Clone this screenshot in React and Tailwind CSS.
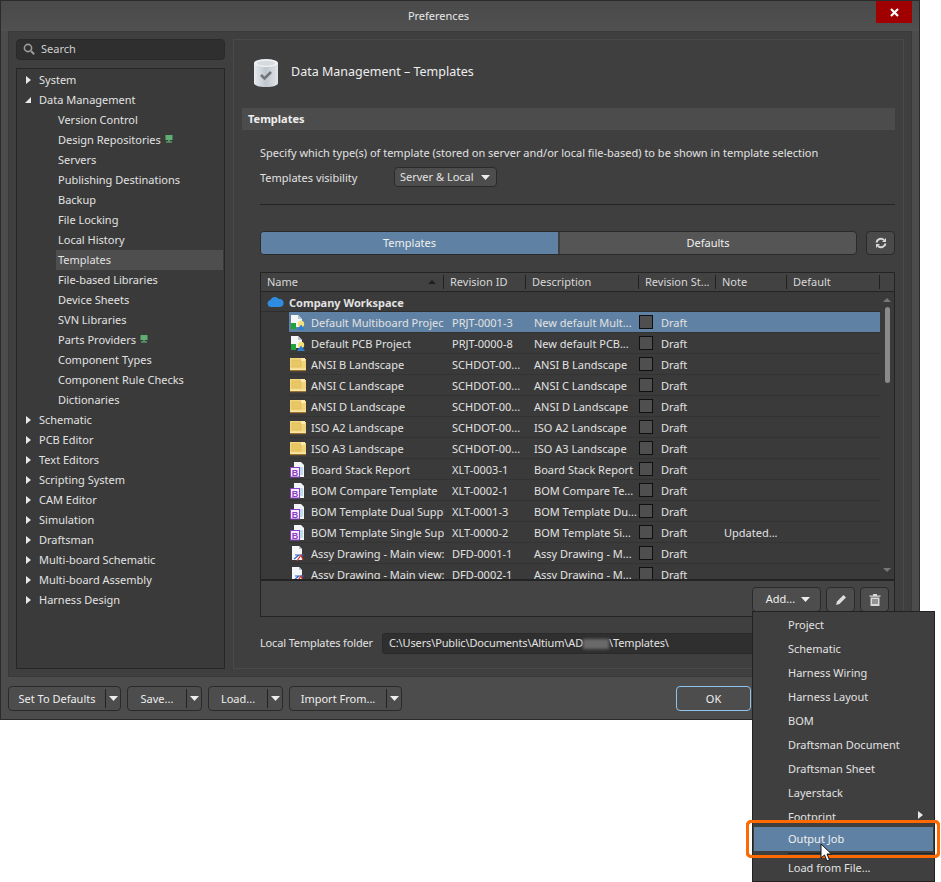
import React from "react";

const tree = [
  ["System", 0, "r"], ["Data Management", 0, "d"], ["Version Control", 1], ["Design Repositories", 1, "g"], ["Servers", 1],
  ["Publishing Destinations", 1], ["Backup", 1], ["File Locking", 1], ["Local History", 1], ["Templates", 1, "s"],
  ["File-based Libraries", 1], ["Device Sheets", 1], ["SVN Libraries", 1], ["Parts Providers", 1, "g"], ["Component Types", 1],
  ["Component Rule Checks", 1], ["Dictionaries", 1], ["Schematic", 0, "r"], ["PCB Editor", 0, "r"], ["Text Editors", 0, "r"],
  ["Scripting System", 0, "r"], ["CAM Editor", 0, "r"], ["Simulation", 0, "r"], ["Draftsman", 0, "r"], ["Multi-board Schematic", 0, "r"],
  ["Multi-board Assembly", 0, "r"], ["Harness Design", 0, "r"],
];

const rows = [
  ["p", "Default Multiboard Projec", "PRJT-0001-3", "New default Mult...", ""],
  ["p", "Default PCB Project", "PRJT-0000-8", "New default PCB...", ""],
  ["f", "ANSI B Landscape", "SCHDOT-00...", "ANSI B Landscape", ""],
  ["f", "ANSI C Landscape", "SCHDOT-00...", "ANSI C Landscape", ""],
  ["f", "ANSI D Landscape", "SCHDOT-00...", "ANSI D Landscape", ""],
  ["f", "ISO A2 Landscape", "SCHDOT-00...", "ISO A2 Landscape", ""],
  ["f", "ISO A3 Landscape", "SCHDOT-00...", "ISO A3 Landscape", ""],
  ["b", "Board Stack Report", "XLT-0003-1", "Board Stack Report", ""],
  ["b", "BOM Compare Template", "XLT-0002-1", "BOM Compare Te...", ""],
  ["b", "BOM Template Dual Suppl", "XLT-0001-3", "BOM Template Du...", ""],
  ["b", "BOM Template Single Sup", "XLT-0000-2", "BOM Template Si...", "Updated..."],
  ["a", "Assy Drawing - Main view:", "DFD-0001-1", "Assy Drawing - M...", ""],
  ["a", "Assy Drawing - Main view:", "DFD-0002-1", "Assy Drawing - M...", ""],
];

const menu = ["Project", "Schematic", "Harness Wiring", "Harness Layout", "BOM", "Draftsman Document", "Draftsman Sheet", "Layerstack"];

const Caret = ({ className = "" }) => (
  <svg width="9" height="5" viewBox="0 0 9 5" className={className}><path d="M0 0h9L4.5 5z" fill="#ececec" /></svg>
);

const Green = () => (
  <svg width="8" height="8" viewBox="0 0 8 8" className="ml-[4px] mt-[-2px]">
    <rect x="0.5" y="0" width="7" height="5" fill="#5fae74" />
    <rect x="3" y="5" width="2" height="1.5" fill="#4d8f60" />
    <rect x="1" y="6.5" width="6" height="1" fill="#6fbf85" />
  </svg>
);

function RowIcon({ t }) {
  if (t === "p")
    return (
      <svg width="16" height="16" viewBox="0 0 16 16" className="shrink-0">
        <path d="M1 0h7l4 4v8H1z" fill="#f4f6f8" />
        <path d="M8 0l4 4H8z" fill="#b9c4cf" />
        <rect x="1" y="8" width="5" height="6" fill="#22a23c" />
        <circle cx="11" cy="9" r="3.200" fill="#f5e27a" />
        <path d="M11 9.500L15 15H7z" fill="#2f7fd0" />
      </svg>
    );
  if (t === "f")
    return (
      <svg width="16" height="14" viewBox="0 0 16 14" className="shrink-0">
        <path d="M0 0h15v1h1v12H0z" fill="#f2d47c" />
        <rect x="0" y="12" width="16" height="1.200" fill="#9c7430" />
        <rect x="0" y="10.500" width="16" height="1.500" fill="#f8e6a8" />
        <rect x="2" y="2" width="9" height="7" fill="#e8c766" stroke="#dcb954" strokeWidth="0.600" />
        <path d="M11 0h4v3h-4z" fill="#fbe9b0" />
      </svg>
    );
  if (t === "b")
    return (
      <svg width="16" height="16" viewBox="0 0 16 16" className="shrink-0">
        <path d="M4 0h7l3 3v12H4z" fill="#f2f5f8" />
        <path d="M9 6h4M9 8h4M9 10h4M9 12h4" stroke="#8fc4e6" strokeWidth="1" />
        <rect x="0.500" y="5.500" width="9" height="9.500" fill="#f4ecfb" stroke="#8a3fc4" />
        <text x="5" y="13.500" fontSize="9" fontWeight="700" textAnchor="middle" fill="#8a3fc4" fontFamily="Liberation Sans">B</text>
      </svg>
    );
  return (
    <svg width="16" height="16" viewBox="0 0 16 16" className="shrink-0">
      <path d="M2 0h7l3 3v11H2z" fill="#f4f6f8" />
      <path d="M9 0l3 3H9z" fill="#b9c4cf" />
      <path d="M4 13l5-4M5 9h9" stroke="#2f62c8" strokeWidth="1.200" />
      <path d="M7 15l4-6 2 5" stroke="#d8342c" strokeWidth="1.200" fill="none" />
    </svg>
  );
}

const Col = ({ w, children }) => (
  <div className={`flex h-full items-center ${w}`}>
    <span className="flex-1 truncate pl-[6px] pr-[2px]">{children}</span>
    <span className="h-[14px] w-px shrink-0 bg-[#202020]" />
  </div>
);

function SplitButton({ w, label }) {
  return (
    <div className={`flex h-[25px] items-center rounded-[4px] border border-[#2a2a2a] bg-[#4d4d4d] ${w}`}>
      <span className="flex-1 pt-px text-center text-[#ededed]">{label}</span>
      <span className="h-[19px] w-px bg-[#222]" />
      <span className="flex w-[14px] justify-center"><Caret /></span>
    </div>
  );
}

export default function App() {
  return (
    <div className="relative h-[882px] w-[941px] overflow-hidden bg-white text-[11px] text-[#e2e2e2] [font-family:'Noto_Sans','Open_Sans',sans-serif]">
      <div className="flex h-[720px] w-[920px] flex-col border border-[#2b2b2b] bg-[#4c4c4c]">
        <div className="flex h-[30px] shrink-0 items-start bg-gradient-to-b from-[#4a4a4a] to-[#505050]">
          <div className="flex-1 pt-[7px] text-center text-[#e8e8e8]">Preferences</div>
          <div className="mr-[7px] flex h-[22px] w-[36px] items-center justify-center bg-[#a00000]">
            <svg width="9" height="9" viewBox="0 0 9 9"><path d="M1 1l7 7M8 1l-7 7" stroke="#fff" strokeWidth="2.200" /></svg>
          </div>
        </div>

        <div className="ml-[7px] flex h-[646px] w-[904px] shrink-0 gap-[8px] border border-[#3a3a3a] bg-[#3f3f3f] p-[7px]">
          <div className="flex w-[209px] shrink-0 flex-col gap-[8px]">
            <div className="flex h-[21px] shrink-0 items-center rounded-[4px] border border-[#2a2a2a] bg-[#2f2f2f] pb-[1px] pl-[6px] text-[#d0d0d0]">
              <svg width="12" height="12" viewBox="0 0 12 12" className="mr-[6px]"><circle cx="5" cy="5" r="3.600" fill="none" stroke="#9a9a9a" strokeWidth="1.600" /><path d="M8 8l3.200 3.200" stroke="#9a9a9a" strokeWidth="2" /></svg>
              Search
            </div>
            <div className="flex-1 border border-[#262626] bg-[#3a3a3a] pt-px">
              {tree.map(([name, lvl, kind]) => (
                <div key={name} className={`flex h-[20px] items-center ${lvl ? "ml-[39px] mr-px" : "pl-[7px]"} ${kind === "s" ? "bg-[#4e4e4e]" : ""}`}>
                  {lvl === 0 && (
                    <span className="flex w-[15px] justify-start pl-[1px]">
                      {kind === "r" ? (
                        <svg width="5" height="8" viewBox="0 0 5 8" className="ml-[1px]"><path d="M0 0l5 4-5 4z" fill="#e8e8e8" /></svg>
                      ) : (
                        <svg width="6" height="6" viewBox="0 0 6 6"><path d="M6 0v6H0z" fill="#e8e8e8" /></svg>
                      )}
                    </span>
                  )}
                  <span className={lvl ? "pl-[2px]" : ""}>{name}</span>
                  {kind === "g" && <Green />}
                </div>
              ))}
            </div>
          </div>

          <div className="flex w-[671px] shrink-0 flex-col border border-[#4a4a4a] bg-[#3f3f3f] px-[8px]">
            <div className="flex h-[68px] shrink-0 items-center pb-[3px] pl-[11px]">
              <svg width="26" height="30" viewBox="0 0 26 30" className="mr-[12px]">
                <defs>
                  <linearGradient id="cyl" x1="0" y1="0" x2="1" y2="0">
                    <stop offset="0" stopColor="#e6ebf0" />
                    <stop offset="0.5" stopColor="#bfc6cd" />
                    <stop offset="1" stopColor="#e1e5ea" />
                  </linearGradient>
                </defs>
                <path d="M1 5v20c0 2.500 5 4 12 4s12-1.500 12-4V5z" fill="url(#cyl)" />
                <ellipse cx="13" cy="5" rx="12" ry="4" fill="#eef1f4" />
                <ellipse cx="13" cy="5.200" rx="9" ry="2.500" fill="#d5dadf" />
                <path d="M8 17l3.500 3.500L18 14" fill="none" stroke="#70757a" strokeWidth="2.600" />
              </svg>
              <span className="text-[12.5px] text-[#eeeeee]">Data Management – Templates</span>
            </div>
            <div className="flex h-[22px] shrink-0 items-center bg-[#4c4c4c] pl-[6px] pt-[1px] font-bold text-[#eeeeee]">Templates</div>

            <div className="flex flex-1 flex-col pl-[18px]">
              <div className="mt-[14px] h-[18px] leading-[18px]">Specify which type(s) of template (stored on server and/or local file-based) to be shown in template selection</div>
              <div className="mt-[5px] flex h-[20px] items-center">
                <span className="w-[134px] pt-[2px]">Templates visibility</span>
                <div className="flex h-[20px] w-[103px] items-center justify-between rounded-[4px] border border-[#2a2a2a] bg-[#4d4d4d] pl-[5px] pr-[6px] pt-px">
                  <span>Server &amp; Local</span><Caret />
                </div>
              </div>
              <div className="mt-[17px] h-px bg-[#242424]" />

              <div className="mt-[26px] flex h-[24px] items-stretch">
                <div className="flex w-[597px] overflow-hidden rounded-[4px] border border-[#2a2a2a] bg-[#555]">
                  <div className="flex w-[297px] items-center justify-center bg-[#5f81a3] text-[#f0f0f0]">Templates</div>
                  <div className="flex flex-1 items-center justify-center border-l-[2px] border-[#3f3f3f] text-[#f0f0f0]">Defaults</div>
                </div>
                <div className="ml-[9px] flex w-[29px] items-center justify-center rounded-[4px] border border-[#2a2a2a] bg-[#4a4a4a]">
                  <svg width="12" height="12" viewBox="0 0 12 12" fill="none" stroke="#d8d8d8" strokeWidth="2">
                    <path d="M1.500 5.500a4.500 4.500 0 0 1 7.500-2.500" /><path d="M10.500 6.500a4.500 4.500 0 0 1-7.500 2.500" />
                    <path d="M11 1v4H7zM1 11V7h4z" fill="#d8d8d8" stroke="none" />
                  </svg>
                </div>
              </div>

              <div className="mt-[17px] w-[635px] border border-[#242424] bg-[#3a3a3a]">
                <div className="flex h-[19px] items-center border-b border-[#242424] bg-[#424242] text-[#d8d8d8]">
                  <div className="flex h-full w-[183px] items-center">
                    <span className="flex-1 pl-[6px]">Name</span>
                    <svg width="8" height="4" viewBox="0 0 8 4" className="mr-[7px]"><path d="M0 4h8L4 0z" fill="#1f1f1f" /></svg>
                    <span className="h-[14px] w-px bg-[#202020]" />
                  </div>
                  <Col w="w-[82px]">Revision ID</Col>
                  <Col w="w-[113px]">Description</Col>
                  <Col w="w-[77px]">Revision St...</Col>
                  <Col w="w-[71px]">Note</Col>
                  <Col w="w-[93px]">Default</Col>
                </div>
                <div className="flex h-[287px] overflow-hidden">
                  <div className="w-[619px] shrink-0">
                    <div className="flex h-[20px] items-center border-b border-[#2e2e2e] pl-[6px] pt-[3px] font-bold">
                      <svg width="17" height="11" viewBox="0 0 17 11" className="mr-[5px] mt-[-3px]"><path d="M4 11a3.600 3.600 0 0 1-.6-7.100A5 5 0 0 1 12 3a4 4 0 0 1 1 8z" fill="#2e8de0" /></svg>
                      Company Workspace
                    </div>
                    {rows.map((r, i) => (
                      <div key={i} className={`ml-[28px] flex h-[21px] shrink-0 items-center border-b border-[#333] pt-[2px] ${i === 0 ? "bg-[#5f81a3]" : ""}`}>
                        <div className="flex w-[155px] shrink-0 items-center overflow-hidden pl-[1px]">
                          <RowIcon t={r[0]} />
                          <span className="ml-[5px] overflow-hidden whitespace-nowrap">{r[1]}</span>
                        </div>
                        <div className="w-[82px] shrink-0 whitespace-nowrap pl-[8px]">{r[2]}</div>
                        <div className="w-[113px] shrink-0 overflow-hidden whitespace-nowrap pl-[8px]">{r[3]}</div>
                        <div className="flex w-[85px] shrink-0 items-center">
                          <span className="mt-[-2px] h-[14px] w-[14px] border border-[#101010] bg-[#4f4f4f]" />
                          <span className="ml-[8px]">Draft</span>
                        </div>
                        <div className="whitespace-nowrap">{r[4]}</div>
                      </div>
                    ))}
                  </div>
                  <div className="flex w-[14px] shrink-0 flex-col items-center pt-[6px]">
                    <svg width="8" height="4" viewBox="0 0 8 4"><path d="M0 4h8L4 0z" fill="#777" /></svg>
                    <div className="mt-[5px] h-[76px] w-[5px] rounded-[3px] bg-[#8a8a8a]" />
                    <svg width="8" height="4" viewBox="0 0 8 4" className="mt-[185px]"><path d="M0 0h8L4 4z" fill="#777" /></svg>
                  </div>
                </div>
                <div className="flex h-[37px] items-start justify-end gap-[5px] border-t-[2px] border-[#242424] bg-[#444] pr-[5px] pt-[6px]">
                  <div className="flex h-[25px] w-[69px] items-center justify-center gap-[6px] rounded-[4px] border border-[#2a2a2a] bg-[#4d4d4d] pl-[3px] text-[#f0f0f0]">Add... <Caret /></div>
                  <div className="flex h-[25px] w-[29px] items-center justify-center rounded-[4px] border border-[#2a2a2a] bg-[#4d4d4d]">
                    <svg width="12" height="12" viewBox="0 0 12 12"><path d="M1 11l1-3.500L8.500 1 11 3.500 4.500 10z" fill="#dedede" /></svg>
                  </div>
                  <div className="flex h-[25px] w-[29px] items-center justify-center rounded-[4px] border border-[#2a2a2a] bg-[#4d4d4d]">
                    <svg width="12" height="13" viewBox="0 0 12 13"><path d="M0.500 2.500h11v1.300h-11zM4 1h4v1.500H4zM1.500 4.500h9V13h-9z" fill="#d8d8d8" /><path d="M4 6v5M6 6v5M8 6v5" stroke="#4d4d4d" /></svg>
                  </div>
                </div>
              </div>

              <div className="mt-[16px] flex h-[21px] items-center">
                <span className="w-[122px] tracking-[-0.15px]">Local Templates folder</span>
                <div className="flex h-[21px] w-[513px] items-center rounded-[3px] border border-[#2a2a2a] bg-[#2f2f2f] pl-[6px] tracking-[-0.14px]">
                  C:\Users\Public\Documents\Altium\AD<span className="h-[10px] w-[26px] bg-[#6a6a6a] blur-[1.5px]" />\Templates\
                </div>
              </div>
            </div>
          </div>
        </div>

        <div className="flex flex-1 items-start gap-[6px] pl-[7px] pt-[9px]">
          <SplitButton w="w-[113px]" label="Set To Defaults" />
          <SplitButton w="w-[75px]" label="Save..." />
          <SplitButton w="w-[75px]" label="Load..." />
          <SplitButton w="w-[113px]" label="Import From..." />
          <div className="ml-[268px] flex h-[25px] w-[75px] items-center justify-center rounded-[4px] border border-[#8fc4ee] bg-[#4d4d4d] pt-px text-[#f0f0f0]">OK</div>
        </div>
      </div>

      <div className="absolute left-[746px] top-[820px] h-[38px] w-[194px] rounded-[5px] border-[3px] border-[#ff6a00] bg-white" />
      <div className="absolute left-[752px] top-[611px] h-[271px] w-[183px] border border-[#222] bg-[#3f3f3f] pt-px">
        {menu.map((m) => (
          <div key={m} className="flex h-[24px] items-center pl-[35px]">{m}</div>
        ))}
        <div className="relative flex h-[24px] items-center pl-[35px]">
          Footprint
          <svg width="5" height="8" viewBox="0 0 5 8" className="absolute right-[11px] top-[6px]"><path d="M0 0l5 4-5 4z" fill="#e8e8e8" /></svg>
        </div>
      </div>
      <div className="absolute left-[752px] top-[823px] flex h-[33px] w-[183px] flex-col border-x border-[#222] bg-[#3f3f3f] pl-[1px] pr-[1px] pt-[4px]">
        <div className="flex h-[24px] shrink-0 items-center bg-[#5f81a3] pl-[34px] text-[#f0f0f0]">Output Job</div>
        <div className="ml-[34px] mt-[2px] h-px bg-[#222]" />
      </div>
      <div className="absolute left-[746px] top-[820px] h-[38px] w-[194px] rounded-[5px] border-[3px] border-[#ff6a00]" />
      <div className="absolute left-[788px] top-[858px] flex h-[20px] items-center">Load from File...</div>
      <svg width="13" height="19" viewBox="0 0 13 19" className="absolute left-[820px] top-[843px]">
        <path d="M1 1v14l3.500-3 2.500 6 2.500-1-2.500-6h4.500z" fill="#fff" stroke="#111" strokeWidth="1" />
      </svg>
    </div>
  );
}
